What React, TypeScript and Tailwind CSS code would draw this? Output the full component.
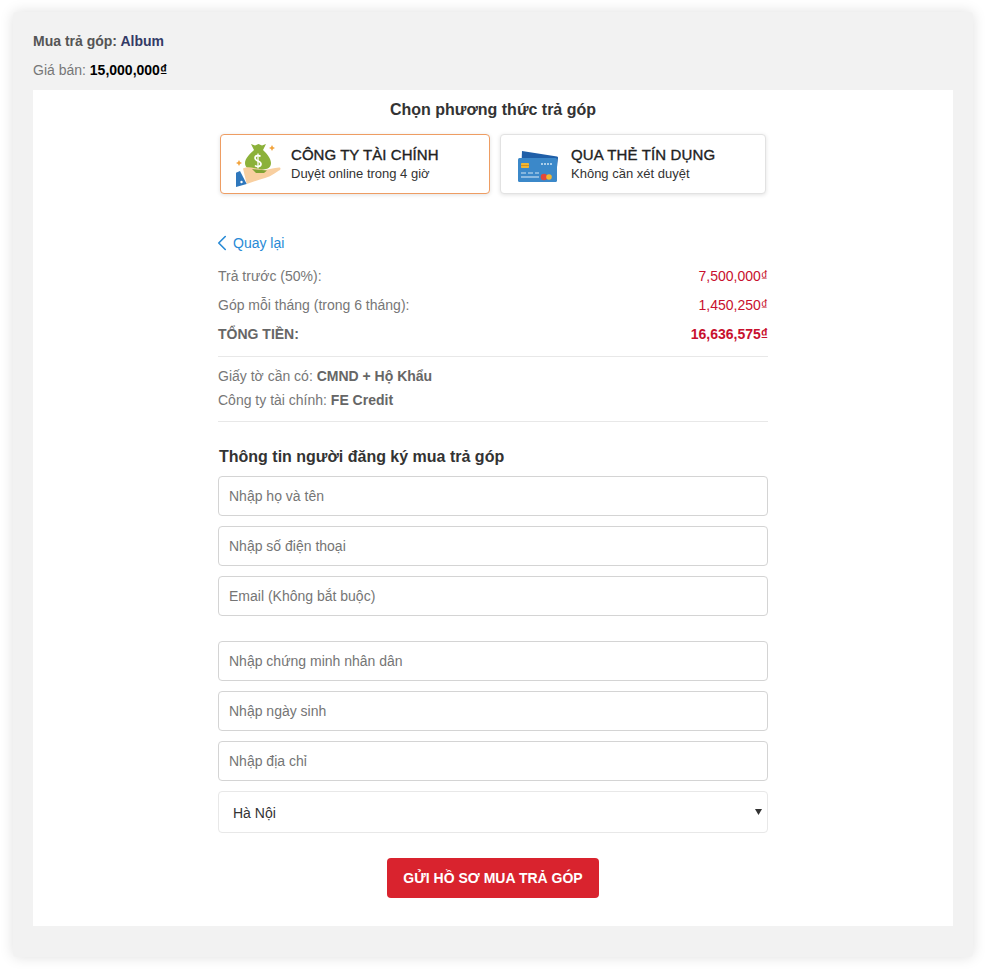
import { ChevronLeft } from 'lucide-react';

function MoneyIcon() {
    return (
        <svg width="46" height="46" viewBox="0 0 46 46" className="shrink-0">
            {/* bag */}
            <path d="M15 3 L19 4.500 L22.500 3 L26 4.500 L30 3 L27 9 L18 9 Z" fill="#8cb13a" />
            <path d="M18 9 L27 9 C30 12 35 17 35 22 C35 27 31 29 22 29 C13 29 9 27 9 22 C9 17 15 12 18 9 Z" fill="#8cb13a" />
            <path d="M24.500 15.500 C23.500 14.200 19 14 19 17 C19 20.500 25 19.500 25 23 C25 26 20.500 26 19 24.500" fill="none" stroke="#fff" strokeWidth="1.700" />
            <path d="M22 12.500 V27.500" stroke="#fff" strokeWidth="1.300" />
            {/* sparkles */}
            <path d="M36 4 L37 6 L39 7 L37 8 L36 10 L35 8 L33 7 L35 6 Z" fill="#f2a33c" />
            <path d="M3 19 L4 21 L6 22 L4 23 L3 25 L2 23 L0 22 L2 21 Z" fill="#f2a33c" />
            {/* hand */}
            <path d="M7 27.500 C10 26 14 26 18 27 L28 29 C32 29 38 26.500 43 26.500 C45 26.500 45 28.500 43 29.500 C37 34 31 37 24 38.500 L10.700 43 Z" fill="#f8cfa0" />
            <path d="M16 28 L31 29.500 L28 32 L20 32 Z" fill="#7fa333" />
            {/* sleeve */}
            <path d="M0 31.700 L4 30 L10.700 43 L0 46 Z" fill="#2f77bc" />
            <circle cx="5.500" cy="41" r="1.200" fill="#fff" />
        </svg>
    );
}

function CardIcon() {
    return (
        <svg width="40" height="32" viewBox="0 0 40 32" className="mt-1 shrink-0">
            <path d="M4 1 L39 6.500 C39.800 6.700 40 7 40 8 L38 26 L3 26 Z" fill="#1f5fa8" />
            <rect x="0" y="8" width="39" height="24" rx="1.500" fill="#3b88c9" />
            <rect x="3" y="13" width="8" height="5" rx="0.800" fill="#f2b632" />
            <path d="M3 15.500 H11" stroke="#c98a1c" strokeWidth="0.800" />
            <path d="M23 14 H25 M26 14 H28 M29 14 H31 M32 14 H34" stroke="#cfe3f4" strokeWidth="1.500" />
            <path d="M3 23 H8 M10 23 H15 M17 23 H21" stroke="#cfe3f4" strokeWidth="1.100" />
            <path d="M3 27 H21" stroke="#cfe3f4" strokeWidth="1.100" />
            <circle cx="26" cy="27" r="3.300" fill="#e2483c" />
            <circle cx="31" cy="27" r="2.800" fill="#f2b632" />
        </svg>
    );
}

function Dong() {
    return <span>₫</span>;
}

const fieldsTop = ['Nhập họ và tên', 'Nhập số điện thoại', 'Email (Không bắt buộc)'];
const fieldsBottom = ['Nhập chứng minh nhân dân', 'Nhập ngày sinh', 'Nhập địa chỉ'];

function Field({ placeholder }: { placeholder: string }) {
    return (
        <input
            type="text"
            placeholder={placeholder}
            className="h-10 w-full rounded-[4px] border border-[#d4d4d4] bg-white px-2.5 text-sm text-[#333] placeholder:text-[#757575] focus:outline-none"
        />
    );
}

export default function App() {
    return (
        <div className="h-[973px] bg-white pl-[13px] pt-3 font-['Liberation_Sans',Arial,sans-serif] text-sm text-[#333]">
            <div className="flex h-[945px] w-[960px] flex-col rounded-[4px] bg-[#f2f2f2] px-5 shadow-[0_0_14px_rgba(0,0,0,0.13)]">
                <div className="flex h-[78px] shrink-0 flex-col">
                    <p className="mt-[19px] h-5 font-bold leading-5 text-[#555]">
                        Mua trả góp: <span className="text-[#333a66]">Album</span>
                    </p>
                    <p className="mt-[9px] h-5 leading-5 text-[#777]">
                        Giá bán: <span className="font-bold text-black">15,000,000<Dong /></span>
                    </p>
                </div>

                <div className="flex h-[836px] flex-col items-center bg-white">
                    <h2 className="mt-[10px] h-5 text-base font-bold leading-5 text-[#333]">Chọn phương thức trả góp</h2>

                    <div className="mt-[14px] flex w-[546px] gap-2.5">
                        <div className="flex h-[60px] w-[270px] items-center gap-[9px] rounded-[4px] border border-[#ee9d63] bg-white pl-[15px] shadow-[0_1px_4px_rgba(0,0,0,0.12)]">
                            <MoneyIcon />
                            <div className="leading-[19px]">
                                <div className="text-[15px] tracking-[0.05px] text-[#222] [-webkit-text-stroke:0.35px_#222]">CÔNG TY TÀI CHÍNH</div>
                                <div className="text-[13px] text-[#333]">Duyệt online trong 4 giờ</div>
                            </div>
                        </div>
                        <div className="flex h-[60px] w-[266px] items-center gap-[13px] rounded-[4px] border border-[#e2e2e2] bg-white pl-[17px] shadow-[0_1px_4px_rgba(0,0,0,0.12)]">
                            <CardIcon />
                            <div className="leading-[19px]">
                                <div className="text-[15px] tracking-[0.15px] text-[#222] [-webkit-text-stroke:0.35px_#222]">QUA THẺ TÍN DỤNG</div>
                                <div className="text-[13px] text-[#333]">Không cần xét duyệt</div>
                            </div>
                        </div>
                    </div>

                    <div className="mt-[39px] w-[550px]">
                        <a className="flex h-5 items-center leading-5 text-[#288ad6]">
                            <ChevronLeft size={26} strokeWidth={1.5} className="-ml-[9px] -mr-[2px]" />
                            Quay lại
                        </a>

                        <div className="mt-[8px] flex h-[29px] items-center justify-between text-[#777]">
                            <span>Trả trước (50%):</span>
                            <span className="text-[#c8102e]">7,500,000<Dong /></span>
                        </div>
                        <div className="flex h-[29px] items-center justify-between text-[#777]">
                            <span>Góp mỗi tháng (trong 6 tháng):</span>
                            <span className="text-[#c8102e]">1,450,250<Dong /></span>
                        </div>
                        <div className="flex h-[29px] items-center justify-between font-bold text-[#666]">
                            <span>TỔNG TIỀN:</span>
                            <span className="text-[#c8102e]">16,636,575<Dong /></span>
                        </div>

                        <div className="mt-[8px] border-t border-[#e8e8e8] pt-[7px] text-[#777]">
                            <p className="h-6 leading-6">Giấy tờ cần có: <b className="text-[#666]">CMND + Hộ Khẩu</b></p>
                            <p className="h-6 leading-6">Công ty tài chính: <b className="text-[#666]">FE Credit</b></p>
                        </div>
                        <div className="mt-[9px] border-t border-[#e8e8e8]" />

                        <h3 className="ml-px mt-[25px] h-5 text-base font-bold leading-5 text-[#333]">Thông tin người đăng ký mua trả góp</h3>

                        <div className="mt-[9px] flex flex-col gap-2.5">
                            {fieldsTop.map((f) => <Field key={f} placeholder={f} />)}
                        </div>
                        <div className="mt-[25px] flex flex-col gap-2.5">
                            {fieldsBottom.map((f) => <Field key={f} placeholder={f} />)}
                            <div className="relative">
                                <select className="h-[42px] w-full appearance-none rounded-[4px] border border-[#e8e8e8] bg-white pl-3.5 pt-[2px] text-sm text-[#333] focus:outline-none">
                                    <option>Hà Nội</option>
                                </select>
                                <svg width="7" height="6" viewBox="0 0 7 6" className="pointer-events-none absolute right-[6px] top-[18px]">
                                    <path d="M0 0 H7 L3.500 6 Z" fill="#333" />
                                </svg>
                            </div>
                        </div>

                        <div className="mt-[25px] flex justify-center">
                            <button className="h-10 w-[212px] rounded-[4px] bg-[#d9232e] text-sm font-bold text-white">GỬI HỒ SƠ MUA TRẢ GÓP</button>
                        </div>
                    </div>
                </div>
            </div>
        </div>
    );
}
